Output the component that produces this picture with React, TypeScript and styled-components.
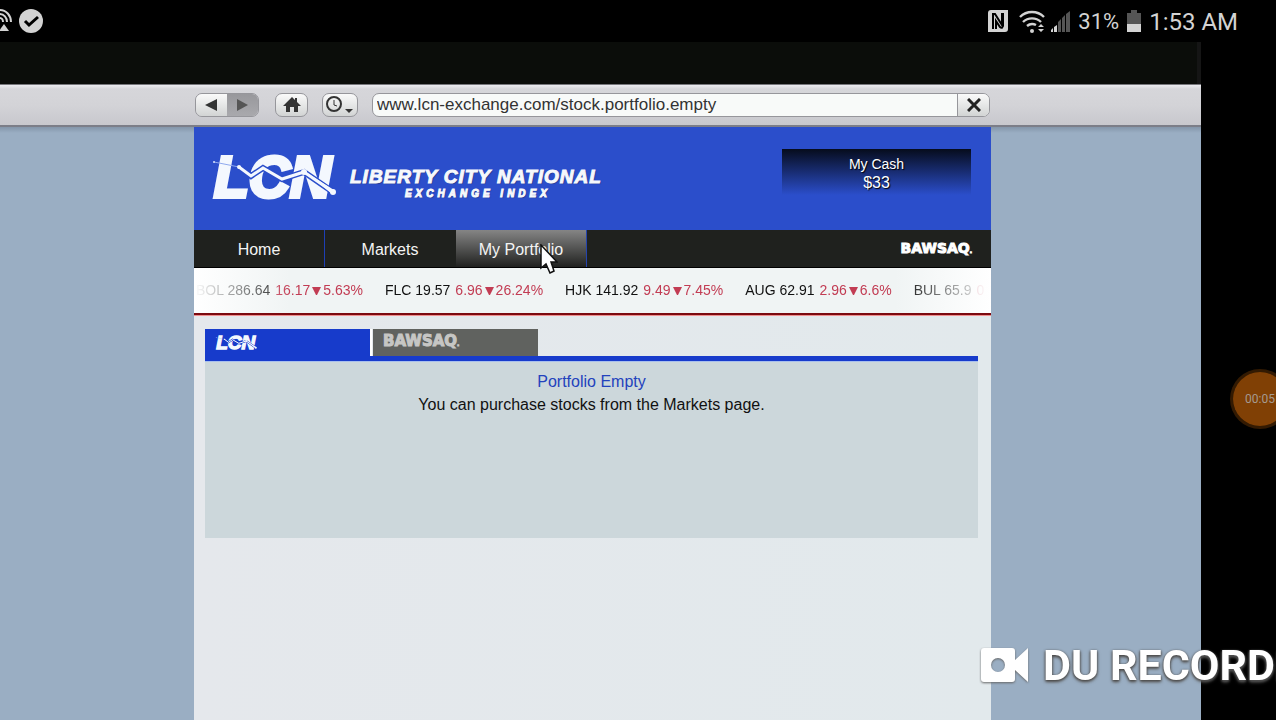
import React from "react";
import styled, { createGlobalStyle, css } from "styled-components";

const GlobalStyle = createGlobalStyle`
  * { box-sizing: border-box; }
  body { margin: 0; background: #000; font-family: "Liberation Sans", Arial, sans-serif; }
  a { color: inherit; text-decoration: none; }
  svg { display: block; flex: none; }
`;

const Screen = styled.div`
  position: relative;
  display: flex;
  flex-direction: column;
  min-height: 100vh;
  overflow: hidden;
  background: #000;
  border-right: 4px solid #fff;
`;

const StatusBar = styled.header`
  display: flex;
  align-items: center;
  justify-content: space-between;
  height: 42px;
  padding-right: 38px;
  color: #d3d3d3;
  font-family: Roboto, sans-serif;
`;

const StatusGroup = styled.div`
  display: flex;
  align-items: center;
  gap: 8px;
`;

const StatusText = styled.span<{ $size: number }>`
  font-size: ${(p) => p.$size}px;
  line-height: 28px;
  padding-top: 2px;
`;

const Game = styled.main`
  flex: 1;
  display: flex;
  flex-direction: column;
  margin-right: 75px;
`;

const Letterbox = styled.div`
  height: 42px;
  background: #0b0d0a;
  border-right: 4px solid #151515;
`;

const Toolbar = styled.nav`
  display: flex;
  align-items: center;
  height: 43px;
  padding: 0 211px 0 195px;
  background: linear-gradient(#ececf0 0, #d6d6da 4px, #d3d3d7 50%, #c8c8cd 100%);
  border-top: 1px solid #77777c;
  border-bottom: 2px solid #7c7e88;
`;

const frame = css`
  height: 24px;
  border: 1px solid #96969b;
  border-radius: 7px;
  overflow: hidden;
`;

const ButtonPair = styled.div`
  ${frame}
  display: flex;
  width: 64px;
  margin-right: 16px;
`;

const ToolFace = styled.button<{ $dim?: boolean }>`
  flex: 1;
  display: flex;
  align-items: center;
  justify-content: center;
  padding: 0;
  border: 0;
  background: ${(p) => (p.$dim ? "linear-gradient(#98989c, #a9a9ad)" : "linear-gradient(#fafafa, #d2d4d4)")};
`;

const ToolButton = styled(ToolFace)<{ $wide?: boolean }>`
  ${frame}
  flex: none;
  width: ${(p) => (p.$wide ? 36 : 33)}px;
  margin-right: 14px;
`;

const AddressBar = styled.div`
  ${frame}
  flex: 1;
  display: flex;
  background: #f8faf9;
`;

const AddressInput = styled.input`
  flex: 1;
  min-width: 0;
  padding: 0 4px;
  border: 0;
  border-right: 1px solid #96969b;
  background: transparent;
  color: #333;
  font-family: "Liberation Sans", Arial, sans-serif;
  font-size: 17px;
  line-height: 22px;
`;

const CloseButton = styled(ToolFace)`
  flex: none;
  width: 31px;
`;

const Desktop = styled.div`
  flex: 1;
  display: flex;
  padding: 0 210px 0 194px;
  background: linear-gradient(#8496aa, #9aaec3 6px);
`;

const Site = styled.div`
  flex: 1;
  min-width: 0;
  background: linear-gradient(90deg, #e5e8ec, #e2e9ec);
`;

const Masthead = styled.header`
  display: flex;
  align-items: flex-start;
  height: 103px;
  padding: 22px 20px 0 18px;
  background: #2b4ecb;
`;

const Brand = styled.a`
  display: flex;
  gap: 12px;
  padding-top: 5px;
`;

const BrandText = styled.span`
  display: flex;
  flex-direction: column;
  align-items: center;
  padding-top: 12px;
  color: #f6f8fc;
  font-weight: bold;
  font-style: italic;
  text-shadow: 1px 1px 1px #24378a;
`;

const BrandName = styled.span`
  font-size: 19px;
  line-height: 21px;
  letter-spacing: 1px;
  -webkit-text-stroke: 1px #f6f8fc;
`;

const BrandTag = styled.span`
  font-size: 10px;
  line-height: 14px;
  letter-spacing: 4px;
  padding-left: 4px;
  -webkit-text-stroke: 1px #f6f8fc;
`;

const Cash = styled.section`
  width: 189px;
  height: 46px;
  margin-left: auto;
  padding-top: 6px;
  background: linear-gradient(#060c1c, #2b4ecb);
  color: #fff;
  text-align: center;
  text-shadow: 1px 1px 1px #000;
`;

const CashLabel = styled.div`
  font-size: 14px;
  line-height: 18px;
`;

const CashValue = styled.div`
  font-size: 16px;
  line-height: 20px;
`;

const SiteNav = styled.nav`
  display: flex;
  align-items: center;
  height: 38px;
  padding-right: 19px;
  background: #1f211e;
  border-bottom: 1px solid #000;
`;

const NavLink = styled.a<{ $active?: boolean }>`
  position: relative;
  width: 131px;
  height: 37px;
  border-right: 1px solid ${(p) => (p.$active ? "#2544ad" : "#1e3fb4")};
  background: ${(p) => (p.$active ? "linear-gradient(#858585, #20211f)" : "none")};
  color: #f4f4f4;
  font-size: 16px;
  line-height: 39px;
  text-align: center;

  &:nth-child(2) {
    border-right-color: #1f211e;
  }
`;

const Wordmark = styled.span<{ $dim?: boolean }>`
  color: ${(p) => (p.$dim ? "#c6c6c4" : "#fff")};
  font-family: "DejaVu Sans", sans-serif;
  font-size: ${(p) => (p.$dim ? 15 : 14)}px;
  font-weight: bold;
  line-height: 18px;
  -webkit-text-stroke: 1px ${(p) => (p.$dim ? "#c6c6c4" : "#fff")};

  &::after {
    content: ".";
    font-size: 6px;
  }
`;

const NavBrand = styled.a`
  margin-left: auto;
  padding-top: 2px;
`;

const Pointer = styled.svg`
  position: absolute;
  left: 84px;
  top: 14px;
  z-index: 1;
`;

const Ticker = styled.div`
  height: 47px;
  background: linear-gradient(90deg, #fff, #f0f4f4 12%, #f0f4f4 88%, #fff);
  border-bottom: 2px solid #7c0a10;
  box-shadow: 0 1px 0 #f08f8f;
`;

const TickerTrack = styled.ul`
  display: flex;
  gap: 22px;
  height: 45px;
  margin: 0;
  padding: 0 0 0 2px;
  overflow: hidden;
  list-style: none;
  color: #111;
  font-size: 14px;
  line-height: 45px;
  white-space: nowrap;
  mask-image: linear-gradient(90deg, transparent 0, #000 100px, #000 calc(100% - 90px), transparent calc(100% - 2px));
`;

const Quote = styled.li`
  display: flex;
  gap: 5px;
`;

const Change = styled.span`
  display: flex;
  align-items: center;
  gap: 2px;
  color: #c23c53;
`;

const Content = styled.section`
  padding: 14px 13px 0 11px;
`;

const Tabs = styled.div`
  display: flex;
  gap: 3px;
  border-bottom: 5px solid #173bcb;
`;

const Tab = styled.button<{ $active?: boolean }>`
  display: flex;
  align-items: center;
  width: 165px;
  height: 27px;
  padding: 0 10px;
  border: 0;
  background: ${(p) => (p.$active ? "#173bcb" : "#60625f")};
  box-shadow: ${(p) => (p.$active ? "2px 0 0 #fff" : "none")};
`;

const Panel = styled.div`
  height: 177px;
  padding-top: 8px;
  background: #ccd7db;
  border-top: 1px solid #a9c0ee;
  color: #111;
  font-size: 16px;
  line-height: 23px;
  text-align: center;
`;

const PanelTitle = styled.h1`
  margin: 0;
  color: #2342bd;
  font-size: 16px;
  font-weight: normal;
  line-height: 23px;
`;

const PanelText = styled.p`
  margin: 0;
`;

const Timer = styled.button`
  position: absolute;
  right: -14px;
  top: 369px;
  width: 60px;
  height: 60px;
  padding: 0;
  border: 3px solid rgba(255, 128, 10, 0.2);
  border-radius: 50%;
  background: rgba(255, 128, 10, 0.5);
  background-clip: padding-box;
  color: #a59a90;
  font-family: Roboto, sans-serif;
  font-size: 12px;
`;

const Watermark = styled.div`
  position: absolute;
  left: 980px;
  top: 641px;
  display: flex;
  align-items: center;
  gap: 14px;
  color: #fff;
  font-family: Roboto, sans-serif;
  font-size: 43px;
  font-weight: bold;
  line-height: 48px;
  white-space: nowrap;
  text-shadow: 0 1px 3px #444;
  filter: drop-shadow(0 1px 1px #666);
`;

function LcnLogo({ width, ground }: { width: number; ground: string }) {
  const trend = "2,8 27,13 39,22 51,14 70,25 92,18 121,38";
  const bold = "27,13 39,22 51,14 70,25 92,18 121,38";
  return (
    <svg width={width} height={Math.round((width * 48) / 126)} viewBox="0 0 126 48" role="img" aria-label="LCN">
      <text
        x="2"
        y="43"
        fill="#f4f8fe"
        stroke="#f4f8fe"
        strokeWidth="4"
        fontFamily="Liberation Sans, Arial, sans-serif"
        fontSize="57"
        fontWeight="bold"
        fontStyle="italic"
      >
        LCN
      </text>
      <polyline points={bold} fill="none" stroke={ground} strokeWidth="6" />
      <polyline points={trend} fill="none" stroke="#8fa9ee" strokeWidth="1" />
      <polyline points={bold} fill="none" stroke="#f4f8fe" strokeWidth="3" />
      <path d="M92 17L122 36L120 40Z" fill="#f4f8fe" />
      <circle cx="2" cy="8" r="1" fill="#d5e0fa" />
      <circle cx="27" cy="13" r="2" fill="#f4f8fe" />
      <circle cx="92" cy="18" r="3" fill="#f4f8fe" />
      <circle cx="121" cy="38" r="3" fill="#f4f8fe" />
    </svg>
  );
}

function DownMark() {
  return (
    <svg width="9" height="8" viewBox="0 0 9 8" aria-hidden="true">
      <path d="M0 0H9L5 8H4Z" fill="#c23c53" />
    </svg>
  );
}

const quotes = [
  { code: "BOL", price: "286.64", move: "16.17", percent: "5.63%" },
  { code: "FLC", price: "19.57", move: "6.96", percent: "26.24%" },
  { code: "HJK", price: "141.92", move: "9.49", percent: "7.45%" },
  { code: "AUG", price: "62.91", move: "2.96", percent: "6.6%" },
  { code: "BUL", price: "65.9", move: "0", percent: "" },
];

export default function App() {
  return (
    <Screen>
      <GlobalStyle />
      <StatusBar>
        <StatusGroup>
          <svg width="44" height="24" viewBox="0 0 44 24" aria-label="Casting, done">
            <g fill="none" stroke="#d3d3d3" strokeWidth="2">
              <path d="M0 1A11 12 0 0 1 11 13" />
              <path d="M0 5A7 8 0 0 1 7 13" />
              <path d="M0 9A3 4 0 0 1 3 13" />
            </g>
            <path d="M4 15L9 22H-1Z" fill="#d3d3d3" />
            <circle cx="31" cy="12" r="12" fill="#d3d3d3" />
            <path d="M25 12L29 16L38 8" fill="none" stroke="#000" strokeWidth="3" />
          </svg>
        </StatusGroup>
        <StatusGroup>
          <svg width="20" height="22" viewBox="0 0 20 22" aria-label="NFC">
            <path d="M3 0H20V19Q20 22 17 22H0V3Q0 0 3 0Z" fill="#d3d3d3" />
            <path d="M5 19V4H7L14 15V3M14 3V4M15 3V16Q14 19 12 17L8 11V19" fill="none" stroke="#000" strokeWidth="2" />
          </svg>
          <svg width="54" height="23" viewBox="0 0 54 23" aria-label="Wi-Fi and signal strength">
            <g fill="none" stroke="#d3d3d3" strokeWidth="2.4">
              <path d="M4 7A17 17 0 0 1 28 7" />
              <path d="M7 12A13 13 0 0 1 25 12" />
              <path d="M11 16A8 8 0 0 1 20 15" />
            </g>
            <circle cx="16" cy="21" r="2" fill="#d3d3d3" />
            <path d="M22 17L25 14L28 17ZM22 19H28L25 22Z" fill="#d3d3d3" />
            <path d="M35 22V20L37 18V22ZM38 22V17L41 15V22Z" fill="#d3d3d3" />
            <path d="M42 22V12L45 9V22ZM46 22V8L49 5V22ZM50 22V4L54 1V22Z" fill="#555" />
          </svg>
          <StatusText $size={22}>31%</StatusText>
          <svg width="14" height="22" viewBox="0 0 14 22" aria-label="Battery">
            <path d="M4 0H10V3H14V14H0V3H4Z" fill="#555" />
            <path d="M0 14H14V22H0Z" fill="#d3d3d3" />
          </svg>
          <StatusText $size={24}>1:53 AM</StatusText>
        </StatusGroup>
      </StatusBar>

      <Game>
        <Letterbox />
        <Toolbar aria-label="Browser">
          <ButtonPair>
            <ToolFace aria-label="Back">
              <svg width="14" height="12" viewBox="0 0 14 12">
                <path d="M12 0V12L0 6Z" fill="#333" />
              </svg>
            </ToolFace>
            <ToolFace $dim aria-label="Forward">
              <svg width="14" height="12" viewBox="0 0 14 12">
                <path d="M1 0V12L12 6Z" fill="#555" />
              </svg>
            </ToolFace>
          </ButtonPair>
          <ToolButton aria-label="Home page">
            <svg width="18" height="16" viewBox="0 0 18 16">
              <path d="M9 0L12 3V1H14V5L18 9H15V15H11V10H7V15H3V9H0Z" fill="#333" />
            </svg>
          </ToolButton>
          <ToolButton $wide aria-label="History">
            <svg width="28" height="18" viewBox="0 0 28 18">
              <circle cx="8" cy="8" r="7" fill="none" stroke="#333" strokeWidth="2" />
              <path d="M8 4V9L11 10" fill="none" stroke="#333" strokeWidth="1" />
              <path d="M19 13H27L23 17Z" fill="#333" />
            </svg>
          </ToolButton>
          <AddressBar>
            <AddressInput aria-label="Address" defaultValue="www.lcn-exchange.com/stock.portfolio.empty" />
            <CloseButton aria-label="Close">
              <svg width="14" height="14" viewBox="0 0 14 14">
                <path d="M1 1L13 13M13 1L1 13" stroke="#222" strokeWidth="3" />
              </svg>
            </CloseButton>
          </AddressBar>
        </Toolbar>

        <Desktop>
          <Site>
            <Masthead>
              <Brand href="#home">
                <LcnLogo width={126} ground="#2b4ecb" />
                <BrandText>
                  <BrandName>LIBERTY CITY NATIONAL</BrandName>
                  <BrandTag>EXCHANGE INDEX</BrandTag>
                </BrandText>
              </Brand>
              <Cash>
                <CashLabel>My Cash</CashLabel>
                <CashValue>$33</CashValue>
              </Cash>
            </Masthead>
            <SiteNav aria-label="Exchange">
              <NavLink href="#home">Home</NavLink>
              <NavLink href="#markets">Markets</NavLink>
              <NavLink href="#portfolio" $active>
                My Portfolio
                <Pointer width="18" height="30" viewBox="0 0 18 30" aria-hidden="true">
                  <path d="M1 1V24L6 20L10 29L14 27L11 18H17Z" fill="#fff" stroke="#111" strokeWidth="1.5" />
                </Pointer>
              </NavLink>
              <NavBrand href="#bawsaq">
                <Wordmark>BAWSAQ</Wordmark>
              </NavBrand>
            </SiteNav>
            <Ticker>
              <TickerTrack>
                {quotes.map((q) => (
                  <Quote key={q.code}>
                    <span>
                      {q.code} {q.price}
                    </span>
                    <Change>
                      {q.move}
                      {q.percent && <DownMark />}
                      {q.percent}
                    </Change>
                  </Quote>
                ))}
              </TickerTrack>
            </Ticker>
            <Content>
              <Tabs role="tablist">
                <Tab role="tab" aria-selected="true" $active>
                  <LcnLogo width={43} ground="#173bcb" />
                </Tab>
                <Tab role="tab" aria-selected="false">
                  <Wordmark $dim>BAWSAQ</Wordmark>
                </Tab>
              </Tabs>
              <Panel role="tabpanel">
                <PanelTitle>Portfolio Empty</PanelTitle>
                <PanelText>You can purchase stocks from the Markets page.</PanelText>
              </Panel>
            </Content>
          </Site>
        </Desktop>
      </Game>

      <Timer>00:05</Timer>
      <Watermark>
        <svg width="49" height="36" viewBox="0 0 49 36" aria-hidden="true">
          <path
            fillRule="evenodd"
            d="M4 1H32Q35 1 35 4V13L48 1V35L35 23V32Q35 35 32 35H4Q1 35 1 32V4Q1 1 4 1ZM18 11A7 7 0 1 0 18 25A7 7 0 1 0 18 11Z"
            fill="#fff"
          />
        </svg>
        DU RECORDER
      </Watermark>
    </Screen>
  );
}
